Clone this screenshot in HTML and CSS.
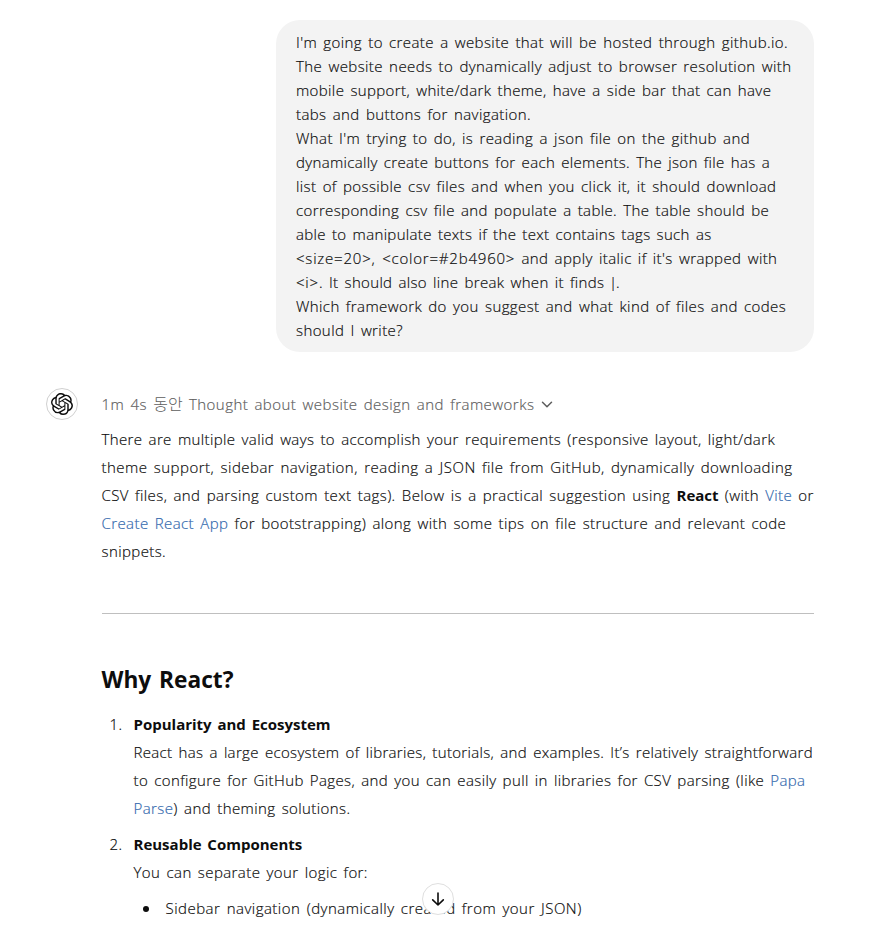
FILE: index.html
```html
<!DOCTYPE html>
<html lang="ko">
<head>
<meta charset="utf-8">
<title>Website design and frameworks</title>
<link rel="stylesheet" href="styles.css">
</head>
<body>
<main class="thread">
  <div class="user-message">I'm going to create a website that will be hosted through github.io.<br>The website needs to dynamically adjust to browser resolution with<br><span class="snug">mobile support, white/dark theme, have a side bar that can have</span><br>tabs and buttons for navigation.<br>What I'm trying to do, is reading a json file on the github and<br><span class="tight">dynamically create buttons for each elements. The json file has a</span><br>list of possible csv files and when you click it, it should download<br><span class="snug">corresponding csv file and populate a table. The table should be</span><br><span class="tight">able to manipulate texts if the text contains tags such as</span><br><span class="tags">&lt;size=20&gt;, &lt;color=#2b4960&gt;</span> and apply italic if it's wrapped with<br><span class="tight"><span class="tags">&lt;i&gt;</span>. It should also line break when it finds <span class="pipe">|</span>.</span><br>Which framework do you suggest and what kind of files and codes<br>should I write?</div>
  <article class="reply">
    <div class="avatar"><svg viewBox="0 0 24 24" width="22" height="22"><path fill="#0d0d0d" d="M22.2819 9.8211a5.9847 5.9847 0 0 0-.5157-4.9108 6.0462 6.0462 0 0 0-6.5098-2.9A6.0651 6.0651 0 0 0 4.9807 4.1818a5.9847 5.9847 0 0 0-3.9977 2.9 6.0462 6.0462 0 0 0 .7427 7.0966 5.98 5.98 0 0 0 .511 4.9107 6.051 6.051 0 0 0 6.5146 2.9001A5.9847 5.9847 0 0 0 13.2599 24a6.0557 6.0557 0 0 0 5.7718-4.2058 5.9894 5.9894 0 0 0 3.9977-2.9001 6.0557 6.0557 0 0 0-.7475-7.073zm-9.022 12.6081a4.4755 4.4755 0 0 1-2.8764-1.0408l.1419-.0804 4.7783-2.7582a.7948.7948 0 0 0 .3927-.6813v-6.7369l2.02 1.1686a.071.071 0 0 1 .038.052v5.5826a4.504 4.504 0 0 1-4.4945 4.4944zm-9.6607-4.1254a4.4708 4.4708 0 0 1-.5346-3.0137l.142.0852 4.783 2.7582a.7712.7712 0 0 0 .7806 0l5.8428-3.3685v2.3324a.0804.0804 0 0 1-.0332.0615L9.74 19.9502a4.4992 4.4992 0 0 1-6.1408-1.6464zM2.3408 7.8956a4.485 4.485 0 0 1 2.3655-1.9728V11.6a.7664.7664 0 0 0 .3879.6765l5.8144 3.3543-2.0201 1.1685a.0757.0757 0 0 1-.071 0l-4.8303-2.7865A4.504 4.504 0 0 1 2.3408 7.872zm16.5963 3.8558L13.1038 8.364 15.1192 7.2a.0757.0757 0 0 1 .071 0l4.8303 2.7913a4.4944 4.4944 0 0 1-.6765 8.1042v-5.6772a.79.79 0 0 0-.407-.667zm2.0107-3.0231l-.142-.0852-4.7735-2.7818a.7759.7759 0 0 0-.7854 0L9.409 9.2297V6.8974a.0662.0662 0 0 1 .0284-.0615l4.8303-2.7866a4.4992 4.4992 0 0 1 6.6802 4.66zM8.3065 12.863l-2.02-1.1638a.0804.0804 0 0 1-.038-.0567V6.0742a4.4992 4.4992 0 0 1 7.3757-3.4537l-.142.0805L8.704 5.459a.7948.7948 0 0 0-.3927.6813zm1.0976-2.3654l2.602-1.4998 2.6069 1.4998v2.9994l-2.5974 1.4997-2.6067-1.4997Z"/></svg></div>
    <div class="content">
      <div class="thought"><span>1m 4s <span class="ko">동안</span> Thought about website design and frameworks</span><svg class="chevron" viewBox="0 0 12 12" width="12" height="12"><path d="M1.500 4.200 6 8.700l4.500-4.500" fill="none" stroke="currentColor" stroke-width="1.5" stroke-linecap="round" stroke-linejoin="round"/></svg></div>
      <p><span class="snug">There are multiple valid ways to accomplish your requirements (responsive layout, light/dark</span><br><span class="loose">theme support, sidebar navigation, reading a JSON file from GitHub, dynamically downloading</span><br>CSV files, and parsing custom text tags). Below is a practical suggestion using <strong>React</strong> (with <a>Vite</a> or<br><a>Create React App</a> for bootstrapping) along with some tips on file structure and relevant code<br>snippets.</p>
      <hr>
      <h2>Why React?</h2>
      <ol>
        <li><strong>Popularity and Ecosystem</strong><br><span class="tight">React has a large ecosystem of libraries, tutorials, and examples. It’s relatively straightforward</span><br><span class="snug">to configure for GitHub Pages, and you can easily pull in libraries for CSV parsing (like <a>Papa</a></span><br><a>Parse</a>) and theming solutions.</li>
        <li><strong>Reusable Components</strong><br>You can separate your logic for:
          <ul><li><span class="loose">Sidebar navigation (dynamically created from your JSON)</span></li></ul>
        </li>
      </ol>
    </div>
  </article>
</main>
<div class="scroll-down"><svg viewBox="0 0 16 16" width="16" height="16"><path d="M8 2v12M2.700 8.900 8 14l5.300-5.100" fill="none" stroke="#0d0d0d" stroke-width="1.6" stroke-linecap="round" stroke-linejoin="round"/></svg></div>
</body>
</html>
```
FILE: styles.css
```css
* { box-sizing: border-box; }
body {
  margin: 0;
  height: 929px;
  overflow: hidden;
  background: #fff;
  color: #0d0d0d;
  font-family: "Open Sans", "Noto Sans CJK KR", sans-serif;
  font-size: 15px;
  font-weight: 300;
  letter-spacing: 0.41px;
  word-spacing: 1.900px;
  white-space: nowrap;
  -webkit-text-stroke: 0.18px currentColor;
}
.thread { display: flex; flex-direction: column; width: 768px; margin-left: 46px; padding-top: 20px; }
.user-message {
  align-self: flex-end;
  width: 538px;
  padding: 10px 20px;
  border-radius: 24px;
  background: #f3f3f3;
  line-height: 24px;
}
.snug { letter-spacing: 0.375px; }
.tight { letter-spacing: 0.335px; }
.loose { letter-spacing: 0.485px; }
.tags { letter-spacing: 0.8px; }
.pipe { margin: 0 -1.500px; }
.reply { display: flex; gap: 23.500px; margin-top: 36px; }
.avatar {
  display: flex;
  align-items: center;
  justify-content: center;
  flex: none;
  width: 32px;
  height: 32px;
  border: 1px solid #d0d0d0;
  border-radius: 50%;
}
.content { flex: 1; min-width: 0; line-height: 28px; }
.thought { display: flex; align-items: center; gap: 7px; height: 32px; color: #5d5d5d; letter-spacing: 0.46px; }
.ko { font-family: "Noto Sans CJK KR", sans-serif; font-size: 16px; line-height: 20px; letter-spacing: 0; -webkit-text-stroke: 0; }
p { margin: 5px 0 0; }
a { color: #3268ad; }
strong, h2 { font-weight: 700; letter-spacing: 0; -webkit-text-stroke: 0; }
hr { height: 1px; margin: 48px 0; border: 0; background: #bfbfbf; }
h2 { margin: 0 0 13px; padding-top: 1px; font-size: 22.700px; line-height: 34px; }
ol, ul { margin: 0; padding: 0; list-style: none; }
ol { counter-reset: step; }
ol > li { counter-increment: step; padding-left: 32px; }
ol > li::before {
  content: counter(step) ".";
  float: left;
  width: 24px;
  margin-left: -32px;
  padding-left: 8px;
}
ol > li + li { margin-top: 8px; }
ul { margin-top: 8px; }
ul > li { display: flex; align-items: center; }
ul > li::before {
  content: "";
  flex: none;
  width: 6px;
  height: 6px;
  margin: 2px 17px 0 9px;
  border-radius: 50%;
  background: #0d0d0d;
}
.scroll-down {
  position: absolute;
  left: 422px;
  top: 883px;
  display: flex;
  align-items: center;
  justify-content: center;
  width: 32px;
  height: 32px;
  border: 1px solid #dfdfdf;
  border-radius: 50%;
  background: #fff;
}
```
